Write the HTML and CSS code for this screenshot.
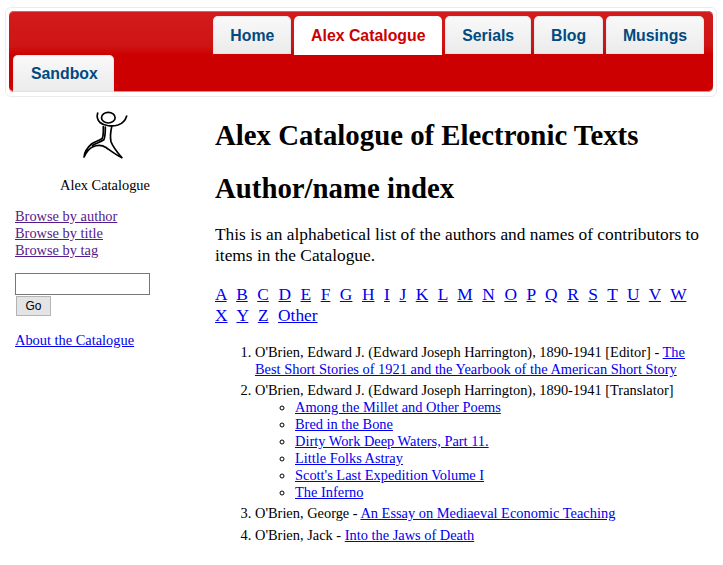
FILE: index.html
```html
<!DOCTYPE html>
<html lang="en">
<head>
<meta charset="utf-8">
<title>Alex Catalogue</title>
<link rel="stylesheet" href="styles.css">
</head>
<body>
<div class="frame">
  <nav class="nav">
    <div class="row row-top">
      <a class="tab" href="#">Home</a>
      <a class="tab active" href="#">Alex Catalogue</a>
      <a class="tab" href="#">Serials</a>
      <a class="tab" href="#">Blog</a>
      <a class="tab" href="#">Musings</a>
    </div>
    <div class="row">
      <a class="tab" href="#">Sandbox</a>
    </div>
  </nav>
</div>
<div class="page">
  <aside class="side">
    <div class="logo">
      <svg class="mark" width="60" height="56" viewBox="0 0 60 56" fill="none" stroke="#000" stroke-width="1.700" stroke-linecap="round" stroke-linejoin="round">
        <ellipse cx="33.300" cy="12.700" rx="6.800" ry="5.300"/>
        <path d="M22.700 8C21.500 12 22.500 15 25 17.500C29 21 37 21.800 43 20C47.500 18.500 50.500 15 51.700 11"/>
        <path d="M28.300 21.700C28.500 26 28.500 30 27.300 33.300C24 36 19.500 36.500 16.500 39C12.500 42.500 9.500 47 9 52C11 48 14 43.500 17.500 42C22 40 27 40 31 42.500C36 46 41 50 46.700 52.500"/>
        <path d="M36.700 21.700C35.500 27 35 32 36 36.700C38 42 42.500 47.500 46.700 52.500"/>
        <path d="M30.300 22C30.300 27 30.500 31 28.800 34.800C25 37.500 20.500 38 17.500 40.500"/>
      </svg>
      <div class="logo-name">Alex Catalogue</div>
    </div>
    <ul class="links">
      <li><a class="seen" href="#">Browse by author</a></li>
      <li><a class="seen" href="#">Browse by title</a></li>
      <li><a class="seen" href="#">Browse by tag</a></li>
    </ul>
    <form class="search">
      <input class="field" type="text">
      <button class="go" type="button">Go</button>
    </form>
    <a class="about" href="#">About the Catalogue</a>
  </aside>
  <main class="main">
    <h1>Alex Catalogue of Electronic Texts</h1>
    <h1>Author/name index</h1>
    <p class="intro">This is an alphabetical list of the authors and names of contributors to items in the Catalogue.</p>
    <p class="alpha">
      <a href="#">A</a> <a href="#">B</a> <a href="#">C</a> <a href="#">D</a> <a href="#">E</a> <a href="#">F</a> <a href="#">G</a> <a href="#">H</a> <a href="#">I</a> <a href="#">J</a> <a href="#">K</a> <a href="#">L</a> <a href="#">M</a> <a href="#">N</a> <a href="#">O</a> <a href="#">P</a> <a href="#">Q</a> <a href="#">R</a> <a href="#">S</a> <a href="#">T</a> <a href="#">U</a> <a href="#">V</a> <a href="#">W</a> <a href="#">X</a> <a href="#">Y</a> <a href="#">Z</a> <a href="#">Other</a>
    </p>
    <ol class="names">
      <li>O'Brien, Edward J. (Edward Joseph Harrington), 1890-1941 [Editor] - <a href="#">The Best Short Stories of 1921 and the Yearbook of the American Short Story</a></li>
      <li>O'Brien, Edward J. (Edward Joseph Harrington), 1890-1941 [Translator]
        <ul class="works">
          <li><a href="#">Among the Millet and Other Poems</a></li>
          <li><a href="#">Bred in the Bone</a></li>
          <li><a href="#">Dirty Work Deep Waters, Part 11.</a></li>
          <li><a href="#">Little Folks Astray</a></li>
          <li><a href="#">Scott's Last Expedition Volume I</a></li>
          <li><a href="#">The Inferno</a></li>
        </ul>
      </li>
      <li class="spaced">O'Brien, George - <a href="#">An Essay on Mediaeval Economic Teaching</a></li>
      <li class="spaced">O'Brien, Jack - <a href="#">Into the Jaws of Death</a></li>
    </ol>
  </main>
</div>
</body>
</html>
```
FILE: styles.css
```css
html, body {
  margin: 0;
  padding: 0;
  background: #fff;
  color: #000;
  font-family: "Liberation Serif", "Times New Roman", serif;
}
a { color: #0000ee; }
a.seen { color: #551a8b; }

.frame {
  margin: 7px 6px 0 5px;
  padding: 3px;
  height: 82px;
  border: 1px solid #ececec;
  border-radius: 6px;
}
.nav {
  height: 81px;
  padding: 0 9px 0 4px;
  border-radius: 5px;
  background: linear-gradient(#d21c1c 0, #cf1414 35px, #cc0000 44px);
  box-shadow: inset 0 1px 0 #e06060, inset 0 -1px 0 #e88a8a;
  display: flex;
  flex-direction: column;
}
.row { display: flex; height: 37px; }
.row-top {
  justify-content: flex-end;
  gap: 3px;
  padding-top: 5px;
  height: 39px;
}
.tab {
  box-sizing: border-box;
  padding: 0 16.900px;
  font: bold 15.840px/38px "Liberation Sans", Arial, sans-serif;
  color: #004a80;
  text-decoration: none;
  background: linear-gradient(#f9f9f9, #ebebeb);
  border-radius: 5px 5px 0 0;
}
.row-top .tab { height: 38px; line-height: 39px; }
.row .tab:not(.active) { box-shadow: inset 0 0 0 1px rgba(220, 220, 225, .5); }
.row:not(.row-top) .tab { height: 37px; padding: 0 16px 0 18px; }
.row-top .tab.active {
  background: #fff;
  color: #cc0000;
  height: 39px;
}

.page {
  display: flex;
  padding: 0 0 0 15px;
}
.side {
  width: 200px;
  flex: none;
  font-size: 14.400px;
  line-height: 17px;
}
.logo { width: 180px; text-align: center; }
.mark { display: block; margin: 8px 0 0 60px; }
.logo-name { margin-top: 16px; }
.links { list-style: none; margin: 14px 0 0; padding: 0; }
.search { margin: 14px 0 0; display: flex; flex-direction: column; align-items: flex-start; }
.field {
  box-sizing: border-box;
  width: 135px;
  height: 22px;
  margin: 0;
  padding: 1px 2px;
  border: 1px solid #767676;
  background: #fff;
}
.go {
  box-sizing: border-box;
  width: 35px;
  height: 20px;
  margin: 1px 0 0 1px;
  padding: 0;
  font: 12px "Liberation Sans", Arial, sans-serif;
  color: #000;
  background: #e4e4e4;
  border: 1px solid #b4b4b4;
}
.about { display: block; margin-top: 16px; width: max-content; }

.main { flex: 1; min-width: 0; padding-right: 20px; }
h1 {
  margin: 0;
  font-size: 28.800px;
  line-height: 30px;
  font-weight: bold;
}
h1:first-child { margin-top: 23px; }
h1 + h1 { margin-top: 23px; }
.intro {
  margin: 21px 0 0;
  font-size: 17.380px;
  line-height: 21px;
}
.alpha {
  margin: 18px 0 0;
  font-size: 17.380px;
  line-height: 21px;
  word-spacing: 5.200px;
}
.names {
  margin: 18px 0 0;
  padding: 0 0 0 40px;
  font-size: 14.400px;
  line-height: 17px;
}
.names > li { margin-bottom: 4px; }
.names > li.spaced { margin: 4px 0 5px; }
.works { margin: 0; padding: 0 0 0 40px; list-style: circle; }
```
